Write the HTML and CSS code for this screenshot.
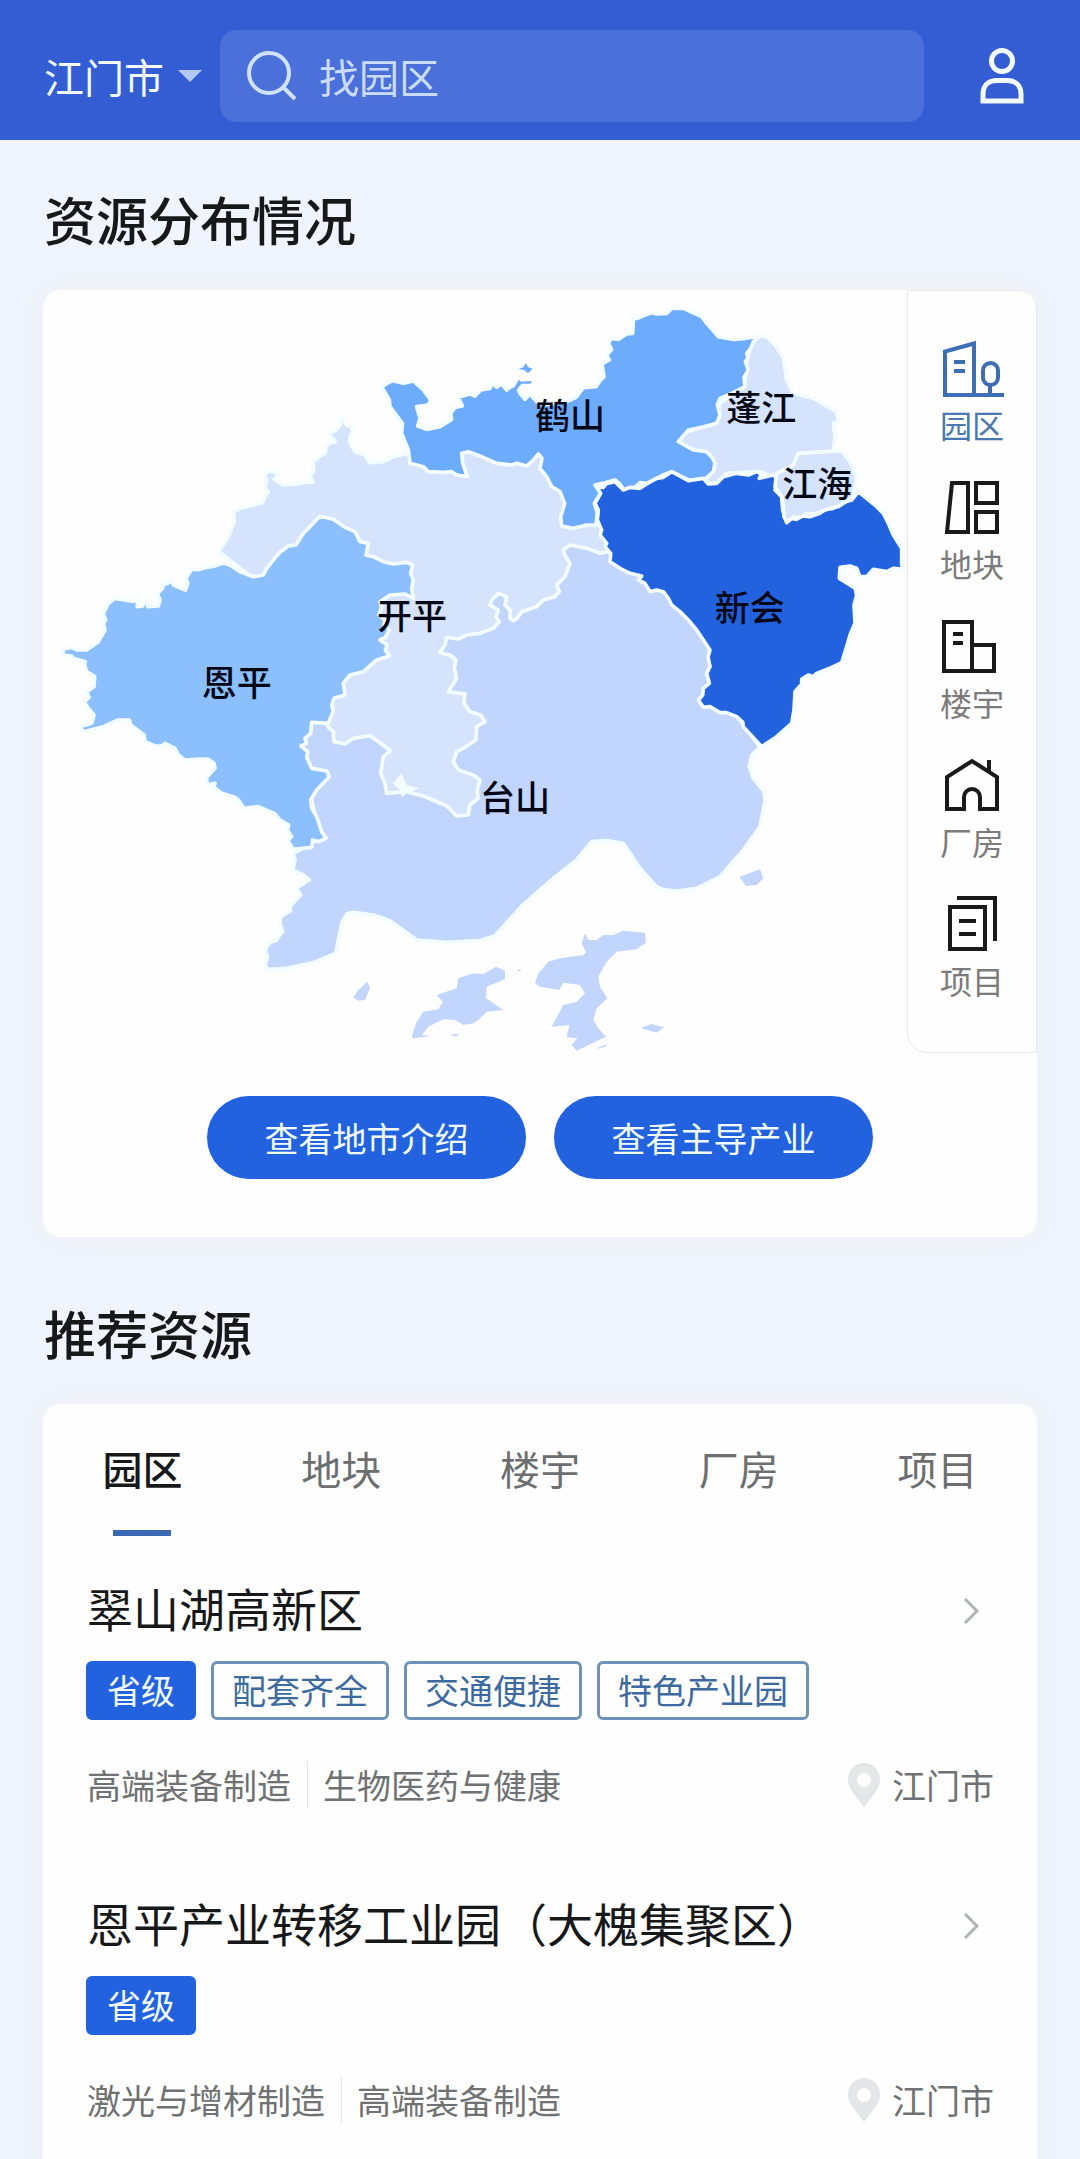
FILE: index.html
```html
<!DOCTYPE html>
<html lang="zh-CN">
<head>
<meta charset="utf-8">
<meta name="viewport" content="width=device-width, initial-scale=1">
<title>资源分布情况</title>
<link rel="stylesheet" href="styles.css">
</head>
<body>
<header class="topbar">
  <label class="city">
    <select class="city-select" aria-label="城市"><option>江门市</option></select>
    <svg class="city-arrow" viewBox="0 0 24 12" aria-hidden="true"><path d="M0 0H24L12 12Z"/></svg>
  </label>
  <label class="search">
    <svg class="search-icon" viewBox="0 0 52 52" aria-hidden="true"><circle cx="23" cy="23" r="20"/><path d="M37 37L49 49"/></svg>
    <input class="search-input" type="search" placeholder="找园区" aria-label="找园区">
  </label>
  <button class="user" type="button" aria-label="我的">
    <svg viewBox="0 0 44 56" aria-hidden="true"><circle cx="22" cy="13" r="10.500"/><path d="M3 53V46C3 37 9 32.500 17 32.500H27C35 32.500 41 37 41 46V53Z"/></svg>
  </button>
</header>

<main class="page">
  <h1 class="heading">资源分布情况</h1>
  <section class="card">
    <div class="map-row">
      <svg class="map" viewBox="9 0 2592 2289" role="img" aria-label="江门市地图">
        <g class="area">
          <path class="c2" d="M760 1690L765 1710 758 1740 790 1755 808 1770 768 1795 782 1815 765 1832 750 1850 752 1862 722 1880 720 1900 728 1925 714 1942 710 1950 690 1958 680 1970 676 1985 683 2000 676 2020 680 2038 740 2035 820 2018 887 1990 905 1900 920 1872 940 1867 1000 1875 1050 1892 1130 1950 1220 1957 1320 1952 1365 1937 1450 1843 1540 1765 1610 1710 1655 1655 1700 1652 1750 1660 1800 1735 1850 1790 1870 1799 1910 1803 1970 1795 2040 1760 2110 1680 2160 1610 2175 1530 2172 1505 2140 1465 2128 1430 2135 1395 2160 1372 2070 1250 2070 1080 1840 860 1700 760 1500 760 1200 1000 1000 1250 900 1280 815 1297 780 1365 800 1450 815 1530 840 1645Z"/>
          <path class="c1" d="M536 785L552 762 570 728 583 695 580 665 600 655 620 650 668 638 676 618 684 606 673 590 680 575 675 555 685 542 700 545 717 553 703 568 730 585 770 582 790 578 820 575 810 560 822 540 818 515 838 500 855 490 858 470 868 460 885 455 866 430 888 420 900 405 898 385 912 390 916 402 940 418 932 435 928 455 945 485 975 495 990 518 1030 515 1060 500 1105 490 1140 440 1300 420 1540 470 1720 600 1720 720 1705 785 1680 790 1640 775 1590 765 1570 780 1575 797 1590 820 1575 860 1550 885 1558 905 1545 920 1510 930 1490 950 1445 965 1432 985 1420 992 1410 985 1410 960 1395 945 1400 920 1375 910 1355 930 1350 945 1375 960 1368 980 1378 995 1360 1015 1320 1030 1280 1035 1255 1047 1220 1042 1215 1065 1200 1088 1230 1095 1248 1110 1243 1135 1250 1165 1225 1205 1275 1212 1272 1240 1290 1265 1322 1275 1335 1295 1310 1310 1308 1350 1270 1375 1250 1385 1240 1415 1255 1440 1300 1455 1320 1470 1312 1500 1314 1525 1290 1545 1285 1575 1250 1578 1220 1548 1150 1518 1100 1505 1040 1510 1035 1480 1022 1450 1030 1400 1052 1382 1020 1358 990 1337 940 1345 915 1362 882 1355 880 1325 865 1312 820 1200 1000 1000 900 800 700 880 640 865Z"/>
          <path class="c4" d="M555 820L575 828 600 845 640 860 670 855 680 835 700 810 718 788 745 768 768 765 790 730 815 705 840 678 880 688 915 712 945 725 960 755 985 760 978 795 1000 800 1030 815 1060 822 1100 817 1118 825 1112 850 1120 870 1115 895 1120 925 1095 912 1050 915 1020 935 1025 950 1017 975 1035 990 1032 1005 1048 1020 1036 1042 1020 1050 1042 1065 1036 1080 1048 1098 1010 1110 970 1145 930 1155 910 1180 915 1215 882 1225 875 1245 880 1262 865 1300 815 1297 812 1330 795 1345 800 1360 783 1368 803 1385 800 1402 815 1435 860 1443 868 1460 830 1500 812 1530 815 1555 830 1580 845 1625 858 1645 835 1655 818 1650 815 1672 760 1678 743 1650 755 1640 742 1620 746 1605 720 1590 703 1570 655 1550 612 1555 595 1530 585 1522 545 1510 520 1490 525 1480 502 1485 500 1462 525 1435 522 1420 505 1408 480 1407 435 1410 415 1395 405 1375 375 1360 365 1368 345 1368 315 1355 312 1335 272 1305 268 1290 235 1290 190 1310 130 1325 118 1310 155 1300 162 1275 145 1255 133 1235 147 1222 140 1205 162 1190 164 1160 140 1145 133 1120 136 1115 100 1105 95 1098 68 1095 70 1078 95 1072 110 1080 140 1080 175 1055 195 1020 190 1000 197 990 190 970 205 940 225 925 280 934 292 918 292 950 308 948 320 922 323 950 355 948 360 930 352 910 368 895 370 880 380 882 395 870 400 885 437 900 443 880 438 865 455 838 480 838 500 832 525 828 545 820Z"/>
          <path class="c1" d="M2160 138L2180 140 2205 165 2230 200 2240 270 2260 310 2320 325 2390 365 2395 395 2380 400 2385 440 2380 480 2400 520 2300 600 2215 570 2160 545 2060 550 2030 580 2005 585 1995 560 2025 530 2010 495 1960 480 1915 455 1940 425 2030 400 2040 340 2110 290 2120 245 2120 210 2140 150Z"/>
          <path class="c3" d="M1025 290L1045 278 1060 272 1090 280 1120 273 1150 300 1172 330 1165 345 1130 350 1140 385 1133 408 1160 418 1200 410 1235 388 1232 370 1245 352 1267 348 1255 322 1290 312 1305 318 1322 300 1350 295 1358 278 1370 292 1385 282 1400 300 1430 285 1440 310 1455 328 1470 312 1490 335 1510 345 1580 335 1608 322 1630 293 1668 290 1680 272 1692 260 1686 222 1708 210 1700 196 1715 178 1705 160 1715 145 1735 148 1760 132 1778 130 1780 95 1772 82 1790 86 1835 68 1850 72 1880 70 1895 55 1930 55 1985 80 2000 100 2035 140 2080 148 2110 146 2160 138 2140 155 2132 175 2120 190 2124 203 2116 215 2125 240 2112 262 2115 290 2075 310 2040 325 2032 345 2040 375 2030 400 1985 412 1945 420 1915 455 1960 480 2000 485 2018 505 2025 520 2020 545 1998 565 1950 572 1915 555 1895 545 1870 555 1850 565 1820 580 1800 578 1785 592 1750 598 1738 580 1725 570 1695 578 1665 585 1682 610 1663 640 1672 670 1668 705 1640 705 1600 715 1565 708 1562 680 1574 640 1560 605 1535 590 1520 560 1500 535 1506 505 1495 492 1480 510 1460 528 1430 520 1415 525 1370 520 1320 498 1285 485 1265 490 1268 520 1282 560 1250 555 1235 545 1210 547 1165 545 1150 530 1110 520 1105 480 1095 455 1085 430 1087 400 1065 370 1050 350 1048 330Z"/>
          <path class="c5" d="M1670 590L1690 592 1700 580 1725 575 1750 600 1770 592 1800 595 1820 582 1850 565 1870 562 1895 545 1945 572 1990 565 2005 582 2030 580 2050 560 2090 550 2125 555 2150 545 2165 552 2158 565 2200 555 2215 570 2205 600 2225 620 2228 660 2240 698 2255 685 2270 688 2285 678 2310 680 2340 670 2355 658 2380 655 2400 640 2435 630 2455 605 2510 650 2530 670 2545 700 2560 735 2585 775 2585 825 2593 838 2560 835 2540 845 2500 838 2480 860 2460 860 2450 835 2430 828 2400 832 2398 865 2430 885 2445 895 2450 915 2442 945 2445 1000 2430 1035 2423 1060 2405 1118 2375 1132 2330 1150 2320 1160 2305 1155 2285 1168 2285 1182 2265 1205 2262 1260 2255 1300 2210 1340 2165 1370 2110 1310 2108 1296 2090 1280 2060 1268 2040 1268 2010 1250 1990 1252 1975 1230 1988 1215 1990 1195 2008 1180 2000 1150 2010 1130 2004 1100 2010 1080 1990 1050 1970 1020 1945 990 1920 965 1895 945 1885 925 1870 905 1850 900 1830 905 1815 880 1795 870 1805 858 1770 850 1740 835 1710 815 1712 790 1695 770 1700 760 1680 735 1685 720 1672 690 1675 660 1665 640 1682 610Z"/>
          <path class="c1" d="M2275 490L2405 482 2430 515 2450 560 2440 620 2395 650 2380 652 2350 662 2330 670 2300 672 2280 682 2260 682 2240 695 2232 680 2230 650 2225 620 2205 590 2210 550 2260 525Z"/>
          <path class="gap" d="M1085 1450L1100 1485 1140 1495 1100 1510 1085 1522 1080 1500 1058 1480Z"/>
        </g>
        <path class="c3" d="M1435 237L1450 232 1458 219 1464 231 1478 236 1464 250 1452 240ZM1400 304L1425 290 1436 269 1444 275 1476 273 1472 281 1444 281 1432 297Z"/>
        <g class="c2">
          <path d="M1485 2080L1495 2050 1525 2015 1560 2005 1630 1995 1638 1987 1625 1960 1635 1930 1645 1950 1670 1950 1690 1935 1720 1935 1750 1922 1815 1928 1818 1958 1790 1978 1730 1985 1700 2015 1675 2060 1680 2090 1702 2125 1670 2155 1660 2190 1675 2215 1698 2240 1610 2282 1595 2265 1612 2245 1580 2242 1588 2205 1535 2210 1570 2145 1610 2135 1635 2110 1620 2085 1570 2078 1558 2100 1500 2090Z"/>
          <path d="M1115 2240L1128 2200 1150 2165 1195 2158 1208 2135 1190 2115 1250 2095 1255 2065 1300 2050 1330 2052 1368 2030 1395 2042 1395 2068 1340 2090 1338 2125 1390 2160 1340 2165 1315 2190 1300 2200 1270 2205 1245 2190 1210 2188 1165 2210 1145 2235 1172 2238 1120 2245Z"/>
          <path d="M940 2122L955 2100 982 2075 990 2095 975 2130 955 2132ZM2098 1760L2160 1738 2170 1765 2150 1785 2118 1788ZM1802 2214L1835 2202 1872 2212 1850 2228ZM1665 2278L1700 2262 1698 2270ZM1230 2233L1260 2232 1245 2240ZM1428 2044L1440 2038 1444 2044Z"/>
        </g>
        <g class="map-label">
          <text x="1485" y="418">鹤山</text>
          <text x="2059" y="392">蓬江</text>
          <text x="2227" y="622">江海</text>
          <text x="1011" y="1016">开平</text>
          <text x="485" y="1217">恩平</text>
          <text x="2024" y="992">新会</text>
          <text x="1320" y="1562">台山</text>
        </g>
      </svg>
      <nav class="side">
        <button class="side-item is-active" type="button">
          <svg class="side-icon" viewBox="0 0 64 60" aria-hidden="true"><path d="M5 56V12.500L34 4.500V56M3 56H64M14 23H25M14 32H25M50 46V56"/><rect x="43" y="24" width="15" height="22" rx="7.500"/></svg>
          <span>园区</span>
        </button>
        <button class="side-item" type="button">
          <svg class="side-icon" viewBox="0 0 64 60" aria-hidden="true"><path d="M12 5H28V54H7Z"/><rect x="36" y="5" width="21" height="20"/><rect x="36" y="34" width="21" height="20"/></svg>
          <span>地块</span>
        </button>
        <button class="side-item" type="button">
          <svg class="side-icon" viewBox="0 0 64 60" aria-hidden="true"><rect x="4" y="5" width="28" height="49"/><path d="M32 28H54V54H32M13 17H23M13 26H23"/></svg>
          <span>楼宇</span>
        </button>
        <button class="side-item" type="button">
          <svg class="side-icon" viewBox="0 0 64 60" aria-hidden="true"><path d="M7 53V21L32 5L57 21V53H40V41a8 8 0 0 0-16 0V53ZM49 4V17"/></svg>
          <span>厂房</span>
        </button>
        <button class="side-item" type="button">
          <svg class="side-icon" viewBox="0 0 64 60" aria-hidden="true"><rect x="10" y="12" width="35" height="42"/><path d="M19 26H36M19 39H36M17 3H55V46"/></svg>
          <span>项目</span>
        </button>
      </nav>
    </div>
    <div class="actions">
      <button class="action" type="button">查看地市介绍</button>
      <button class="action" type="button">查看主导产业</button>
    </div>
  </section>

  <h2 class="heading heading-next">推荐资源</h2>
  <section class="card card-list">
    <nav class="tabs">
      <button class="tab is-active" type="button">园区</button>
      <button class="tab" type="button">地块</button>
      <button class="tab" type="button">楼宇</button>
      <button class="tab" type="button">厂房</button>
      <button class="tab" type="button">项目</button>
    </nav>
    <article class="item">
      <a class="item-title" href="#park-1">翠山湖高新区
        <svg class="chevron" viewBox="0 0 16 26" aria-hidden="true"><path d="M2 1L14 13L2 25"/></svg>
      </a>
      <div class="tags">
        <span class="tag is-solid">省级</span>
        <span class="tag">配套齐全</span>
        <span class="tag">交通便捷</span>
        <span class="tag">特色产业园</span>
      </div>
      <div class="meta">
        <span class="trade">高端装备制造</span>
        <span class="trade">生物医药与健康</span>
        <span class="place">
          <svg class="pin" viewBox="0 0 34 44" aria-hidden="true"><path fill-rule="evenodd" d="M17 0C26 0 33 7 33 17C33 26 25 33 17 44C9 33 1 26 1 17C1 7 8 0 17 0ZM17 10A7 7 0 1 0 17 24A7 7 0 1 0 17 10Z"/></svg>
          江门市
        </span>
      </div>
    </article>
    <article class="item">
      <a class="item-title" href="#park-2">恩平产业转移工业园（大槐集聚区）
        <svg class="chevron" viewBox="0 0 16 26" aria-hidden="true"><path d="M2 1L14 13L2 25"/></svg>
      </a>
      <div class="tags">
        <span class="tag is-solid">省级</span>
      </div>
      <div class="meta">
        <span class="trade">激光与增材制造</span>
        <span class="trade">高端装备制造</span>
        <span class="place">
          <svg class="pin" viewBox="0 0 34 44" aria-hidden="true"><path fill-rule="evenodd" d="M17 0C26 0 33 7 33 17C33 26 25 33 17 44C9 33 1 26 1 17C1 7 8 0 17 0ZM17 10A7 7 0 1 0 17 24A7 7 0 1 0 17 10Z"/></svg>
          江门市
        </span>
      </div>
    </article>
  </section>
</main>
</body>
</html>
```
FILE: styles.css
```css
* { box-sizing: border-box; }

body {
  margin: 0;
  min-height: 100vh;
  display: flex;
  flex-direction: column;
  background: #eff4fd;
  color: #17181a;
  font-family: "Noto Sans CJK SC", sans-serif;
}

button, input, select {
  margin: 0;
  padding: 0;
  border: 0;
  background: none;
  color: inherit;
  font: inherit;
}

svg { display: block; }

/* Top bar */
.topbar {
  display: flex;
  align-items: center;
  padding: 30px 56px 18px 44px;
  background: #355dd3;
  color: #f2fbff;
  font-size: 40px;
}

.city {
  display: flex;
  align-items: center;
  gap: 14px;
  margin-right: 18px;
}

.city-select {
  appearance: none;
  width: 120px;
  height: 60px;
  line-height: 60px;
}

.city-arrow { width: 24px; fill: #b3c8f2; }

.search {
  flex: 1;
  display: flex;
  align-items: center;
  gap: 21px;
  height: 92px;
  padding: 0 26px;
  border-radius: 16px;
  background: #4c70d9;
}

.search-icon {
  width: 52px;
  fill: none;
  stroke: #cfe2fb;
  stroke-width: 4;
}

.search-input {
  flex: 1;
  min-width: 0;
  height: 60px;
  outline: 0;
  appearance: none;
}

.search-input::placeholder { color: #c9dcfa; opacity: 1; }

.user { width: 44px; margin-left: 56px; }
.user svg { fill: none; stroke: #f2fbff; stroke-width: 5; }

/* Sections */
.page {
  flex: 1;
  display: flex;
  flex-direction: column;
  padding: 49px 43px 0;
}

.heading {
  margin: 0 0 41px;
  padding-left: 1px;
  font-size: 52px;
  line-height: 60px;
  font-weight: 500;
}

.heading-next { margin-top: 66px; }

.card {
  border-radius: 18px;
  background: #fefefe;
  box-shadow: 0 0 30px #eff2f2;
}

.map-row { display: flex; align-items: stretch; }
.map { flex: 1; min-width: 0; }

.area { stroke: #f3fdff; stroke-width: 11; stroke-linejoin: round; }
.c1 { fill: #d6e3fd; }
.c2 { fill: #c2d5fc; }
.c3 { fill: #6dacfd; }
.c4 { fill: #8bbffe; }
.c5 { fill: #2262df; }
.gap { fill: #f3fdff; stroke: none; }

.map-label { fill: #040816; font-size: 105px; font-weight: 500; }

.side {
  flex: none;
  width: 130px;
  display: flex;
  flex-direction: column;
  align-items: center;
  gap: 39px;
  padding-top: 48px;
  border: 1px solid #e6e8e9;
  border-radius: 0 18px 0 20px;
}

.side-item {
  display: flex;
  flex-direction: column;
  align-items: center;
  gap: 5px;
  height: 100px;
  color: #7b7b7b;
  font-size: 32px;
  line-height: 40px;
}

.side-icon {
  flex: none;
  width: 64px;
  height: 60px;
  fill: none;
  stroke: #1a1a1a;
  stroke-width: 4;
}

.side-item.is-active { color: #4878ad; }
.side-item.is-active .side-icon { stroke: #3d6db5; }

.actions {
  display: flex;
  justify-content: center;
  gap: 28px;
  padding: 43px 0 58px;
}

.action {
  width: 319px;
  height: 83px;
  border-radius: 42px;
  background: #2262df;
  color: #f2fdff;
  font-size: 34px;
}

/* Recommended list */
.card-list {
  flex: 1;
  border-radius: 18px 18px 0 0;
}

.tabs { display: flex; padding-top: 36px; }

.tab {
  flex: 1;
  display: flex;
  flex-direction: column;
  align-items: center;
  gap: 34px;
  color: #6c6e6f;
  font-size: 40px;
  line-height: 56px;
}

.tab::after { content: ""; width: 58px; height: 6px; }
.tab.is-active { color: #17181a; font-weight: 500; }
.tab.is-active::after { background: #3a69b4; }

.item { padding: 41px 43px 42px; }

.item-title {
  display: flex;
  align-items: center;
  justify-content: space-between;
  padding: 0 15px 0 1px;
  color: inherit;
  font-size: 46px;
  line-height: 60px;
  text-decoration: none;
}

.chevron {
  width: 16px;
  margin-top: 8px;
  fill: none;
  stroke: #b0b3b4;
  stroke-width: 3;
}

.tags { display: flex; gap: 15px; margin: 24px 0 41px; }

.tag {
  height: 59px;
  padding: 0 18px;
  border: 3px solid #6f93b8;
  border-radius: 6px;
  color: #3c6a9f;
  font-size: 34px;
  line-height: 52px;
}

.tag.is-solid { border-color: #2262df; background: #2262df; color: #f2fdff; }

.meta {
  display: flex;
  padding-left: 1px;
  color: #6f7172;
  font-size: 34px;
  line-height: 48px;
}

.trade + .trade {
  margin-left: 16px;
  padding-left: 15px;
  border-left: 1px solid #dfe6e6;
}

.place {
  display: flex;
  align-items: center;
  gap: 11px;
  margin-left: auto;
}

.pin { width: 34px; fill: #e3e7e7; }
```
